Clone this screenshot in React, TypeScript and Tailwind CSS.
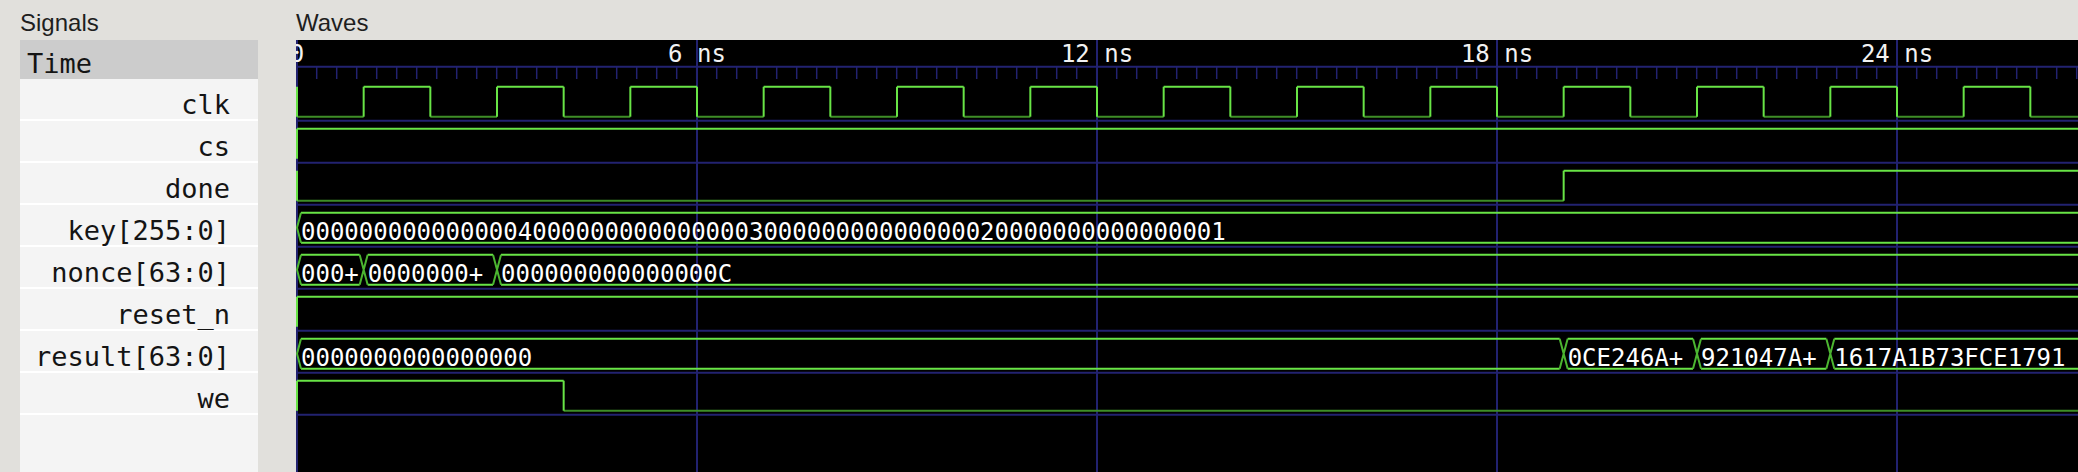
import React from "react";

const W = 1782;
const H = 432;
const BRIGHT = "#68e446";
const DARK = "#3e8e27";
const XCOL = "#4cb631";
const NAVY = "#222270";
const X = (t: number) => 1 + (t * 400) / 6;
const rowTop = (i: number) => 38.7 + 42 * i;
const T_END = 30;

type Bin = { kind: "bin"; changes: [number, number][] };
type Bus = { kind: "bus"; segs: [number, string][] };
type Sig = { name: string; wave: Bin | Bus };

const clkChanges: [number, number][] = [];
for (let t = 0; t <= 27; t++) clkChanges.push([t, t % 2]);

const signals: Sig[] = [
  { name: "clk", wave: { kind: "bin", changes: clkChanges } },
  { name: "cs", wave: { kind: "bin", changes: [[0, 1]] } },
  { name: "done", wave: { kind: "bin", changes: [[0, 0], [19, 1]] } },
  {
    name: "key[255:0]",
    wave: {
      kind: "bus",
      segs: [[0, "0000000000000004000000000000000300000000000000020000000000000001"]],
    },
  },
  {
    name: "nonce[63:0]",
    wave: {
      kind: "bus",
      segs: [
        [0, "000+"],
        [1, "0000000+"],
        [3, "000000000000000C"],
      ],
    },
  },
  { name: "reset_n", wave: { kind: "bin", changes: [[0, 1]] } },
  {
    name: "result[63:0]",
    wave: {
      kind: "bus",
      segs: [
        [0, "0000000000000000"],
        [19, "0CE246A+"],
        [21, "921047A+"],
        [23, "1617A1B73FCE1791"],
      ],
    },
  },
  { name: "we", wave: { kind: "bin", changes: [[0, 1], [4, 0]] } },
];

function BinWave({ w, i }: { w: Bin; i: number }) {
  const top = rowTop(i);
  const hi = top + 8;
  const lo = top + 38;
  const els: React.ReactNode[] = [];
  w.changes.forEach(([t, v], k) => {
    const x1 = X(t);
    const x2 = k + 1 < w.changes.length ? X(w.changes[k + 1][0]) : X(T_END);
    els.push(
      <line
        key={`h${k}`}
        x1={x1}
        x2={x2}
        y1={v ? hi : lo}
        y2={v ? hi : lo}
        stroke={v ? BRIGHT : DARK}
        strokeWidth={2}
      />
    );
    els.push(
      <line key={`v${k}`} x1={x1} x2={x1} y1={hi} y2={lo} stroke={BRIGHT} strokeWidth={2} />
    );
  });
  return <g>{els}</g>;
}

function BusWave({ w, i }: { w: Bus; i: number }) {
  const top = rowTop(i);
  const hi = top + 8;
  const lo = top + 38;
  const mid = (hi + lo) / 2;
  const d = 4;
  const els: React.ReactNode[] = [];
  w.segs.forEach(([t, label], k) => {
    const x1 = X(t);
    const x2 = k + 1 < w.segs.length ? X(w.segs[k + 1][0]) : X(T_END);
    els.push(<line key={`t${k}`} x1={x1 + d} x2={x2 - d} y1={hi} y2={hi} stroke={BRIGHT} strokeWidth={2} />);
    els.push(<line key={`b${k}`} x1={x1 + d} x2={x2 - d} y1={lo} y2={lo} stroke={BRIGHT} strokeWidth={2} />);
    if (t === 0) {
      els.push(
        <path
          key={`x${k}`}
          d={`M${x1 + d} ${hi} L${x1} ${mid} L${x1 + d} ${lo}`}
          fill="none"
          stroke={XCOL}
          strokeWidth={2}
        />
      );
    } else {
      els.push(
        <path
          key={`x${k}`}
          d={`M${x1 - d} ${hi} L${x1 + d} ${lo} M${x1 - d} ${lo} L${x1 + d} ${hi}`}
          fill="none"
          stroke={XCOL}
          strokeWidth={2}
        />
      );
    }
    els.push(
      <text
        key={`l${k}`}
        x={x1 + 4}
        y={top + 35}
        fill="#ffffff"
        fontSize={24}
        fontFamily="'DejaVu Sans Mono', monospace"
      >
        {label}
      </text>
    );
  });
  return <g>{els}</g>;
}

function Waves() {
  const ticks: number[] = [];
  for (let x = 0.7; x < W; x += 20) ticks.push(x);
  const majors = [6, 12, 18, 24];
  return (
    <svg width={W} height={H} viewBox={`0 0 ${W} ${H}`} className="block">
      <rect x={0} y={0} width={W} height={H} fill="#000" />
      {/* ruler */}
      <line x1={0} x2={W} y1={26.7} y2={26.7} stroke={NAVY} strokeWidth={2} />
      {ticks.map((x, k) => (
        <line key={k} x1={x} x2={x} y1={27} y2={39} stroke={NAVY} strokeWidth={1.5} />
      ))}
      {majors.map((t) => (
        <line key={t} x1={X(t)} x2={X(t)} y1={0} y2={H} stroke={NAVY} strokeWidth={2} />
      ))}
      <line x1={1} x2={1} y1={0} y2={H} stroke={NAVY} strokeWidth={2} />
      {/* row separators */}
      {signals.map((_, i) => (
        <line
          key={i}
          x1={0}
          x2={W}
          y1={rowTop(i) + 42}
          y2={rowTop(i) + 42}
          stroke={NAVY}
          strokeWidth={2}
        />
      ))}
      {/* labels */}
      <g fill="#f2f2f2" fontSize={24} fontFamily="'DejaVu Sans Mono', monospace" textAnchor="middle">
        <text x={X(0)} y={22}>0</text>
        {majors.map((t) => (
          <text key={t} x={X(t)} y={22}>{`${t} ns`}</text>
        ))}
      </g>
      {signals.map((s, i) =>
        s.wave.kind === "bin" ? (
          <BinWave key={i} w={s.wave} i={i} />
        ) : (
          <BusWave key={i} w={s.wave} i={i} />
        )
      )}
    </svg>
  );
}

export default function App() {
  return (
    <div className="flex h-[472px] w-[2078px] overflow-hidden bg-[#e1e0dc]">
      <div className="flex w-[258px] flex-col pl-[20px]">
        <div className="h-[40px] pt-[11px] font-['Liberation_Sans',Arial,sans-serif] text-[24px] leading-none text-[#1e1e1e]">
          Signals
        </div>
        <div className="flex-1 bg-[#f4f4f4] font-['DejaVu_Sans_Mono',monospace] text-[27px] leading-none text-[#141414]">
          <div className="h-[39px] bg-[#cccccc] pl-[7px] pt-[10px]">Time</div>
          {signals.map((s) => (
            <div
              key={s.name}
              className="h-[42px] border-b-2 border-white pr-[28px] pt-[12px] text-right whitespace-pre"
            >
              {s.name}
            </div>
          ))}
        </div>
      </div>
      <div className="ml-[38px] flex flex-1 flex-col">
        <div className="h-[40px] pt-[11px] font-['Liberation_Sans',Arial,sans-serif] text-[24px] leading-none text-[#1e1e1e]">
          Waves
        </div>
        <div className="flex-1 overflow-hidden bg-black">
          <Waves />
        </div>
      </div>
    </div>
  );
}
